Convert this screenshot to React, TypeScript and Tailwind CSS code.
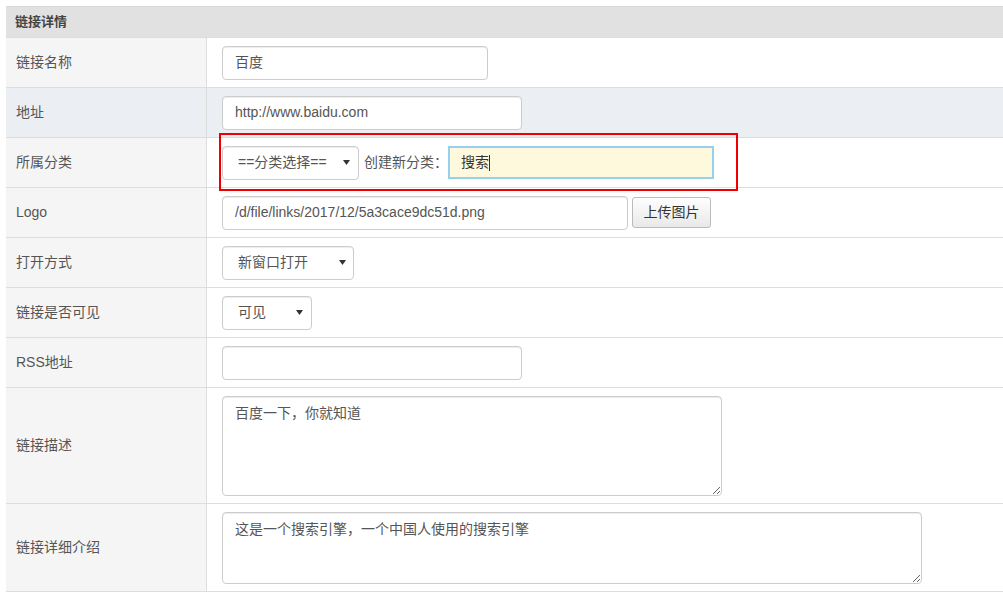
import React from "react";

const FONT = '"Liberation Sans", Arial, "Noto Sans CJK SC", sans-serif';

function Arrow() {
  return (
    <svg width="7" height="5" viewBox="0 0 7 5" className="shrink-0">
      <polygon points="0,0 7,0 3.5,5" fill="#333" />
    </svg>
  );
}

function Select({ w, text, arrowRight = 8 }: { w: number; text: string; arrowRight?: number }) {
  return (
    <div
      className="h-[34px] border border-[#ccc] rounded-[4px] bg-white flex items-center justify-between pl-[15px] text-[14px] text-[#555] shadow-[inset_0_1px_1px_rgba(0,0,0,0.075)]"
      style={{ width: w, paddingRight: arrowRight }}
    >
      <span>{text}</span>
      <Arrow />
    </div>
  );
}

function Input({ w, value }: { w: number; value?: string }) {
  return (
    <div
      className="h-[34px] border border-[#ccc] rounded-[4px] bg-white flex items-center px-[12px] text-[14px] text-[#555] shadow-[inset_0_1px_1px_rgba(0,0,0,0.075)]"
      style={{ width: w }}
    >
      {value}
    </div>
  );
}

function Row({
  label,
  children,
  hl = false,
  h = 50,
  top = false,
}: {
  label: string;
  children: React.ReactNode;
  hl?: boolean;
  h?: number;
  top?: boolean;
}) {
  return (
    <div
      className={`flex border-t border-[#ddd] ${hl ? "bg-[#ebeff4]" : ""}`}
      style={{ height: h }}
    >
      <div
        className={`w-[201px] shrink-0 border-r border-[#ddd] flex items-center pl-[10px] text-[14px] text-[#555] ${
          hl ? "bg-[#ebeff4]" : "bg-[#f5f5f5]"
        }`}
      >
        {label}
      </div>
      <div
        className={`flex-1 flex pl-[15px] ${top ? "items-start pt-[8px]" : "items-center"} ${
          hl ? "bg-[#ebeff4]" : "bg-white"
        }`}
      >
        {children}
      </div>
    </div>
  );
}

export default function App() {
  return (
    <div className="relative w-[1003px] h-[613px] bg-white overflow-hidden" style={{ fontFamily: FONT }}>
      <div className="pl-[6px] pt-[6px]">
        <div className="h-[31px] border-t border-[#d9d9d9] bg-[#e1e1e1] flex items-center pl-[9px] text-[13px] font-bold text-[#444]">
          链接详情
        </div>
        <Row label="链接名称">
          <Input w={266} value="百度" />
        </Row>
        <Row label="地址" hl>
          <Input w={300} value="http://www.baidu.com" />
        </Row>
        <Row label="所属分类">
          <div className="flex items-center">
            <Select w={137} text="==分类选择==" arrowRight={8} />
            <span className="ml-[5px] text-[14px] text-[#555] w-[84px]">创建新分类：</span>
            <div className="w-[266px] h-[33px] border-2 border-[#95d1ef] bg-[#fef9dc] flex items-center pl-[11px] text-[14px] text-[#333]">
              搜索
              <span className="inline-block w-[1px] h-[16px] bg-[#333]" />
            </div>
          </div>
        </Row>
        <Row label="Logo">
          <div className="flex items-center">
            <Input w={406} value="/d/file/links/2017/12/5a3cace9dc51d.png" />
            <div className="ml-[4px] w-[79px] h-[31px] border border-[#bbb] rounded-[3px] bg-gradient-to-b from-[#fefefe] to-[#e9e9e9] flex items-center justify-center text-[14px] text-[#333]">
              上传图片
            </div>
          </div>
        </Row>
        <Row label="打开方式">
          <Select w={132} text="新窗口打开" arrowRight={7} />
        </Row>
        <Row label="链接是否可见">
          <Select w={90} text="可见" arrowRight={8} />
        </Row>
        <Row label="RSS地址">
          <Input w={300} />
        </Row>
        <Row label="链接描述" h={116} top>
          <textarea
            readOnly
            defaultValue="百度一下，你就知道"
            className="w-[500px] h-[100px] border border-[#ccc] rounded-[4px] bg-white px-[12px] py-[6px] text-[14px] text-[#555] outline-none shadow-[inset_0_1px_1px_rgba(0,0,0,0.075)] resize"
            style={{ fontFamily: FONT }}
          />
        </Row>
        <div className="border-b border-[#ddd]">
          <Row label="链接详细介绍" h={88} top>
            <textarea
              readOnly
              defaultValue="这是一个搜索引擎，一个中国人使用的搜索引擎"
              className="w-[700px] h-[72px] border border-[#ccc] rounded-[4px] bg-white px-[12px] py-[6px] text-[14px] text-[#555] outline-none shadow-[inset_0_1px_1px_rgba(0,0,0,0.075)] resize"
              style={{ fontFamily: FONT }}
            />
          </Row>
        </div>
      </div>
      <div className="absolute left-[219px] top-[133px] w-[519px] h-[58px] border-2 border-[#ee0000] pointer-events-none" />
    </div>
  );
}
